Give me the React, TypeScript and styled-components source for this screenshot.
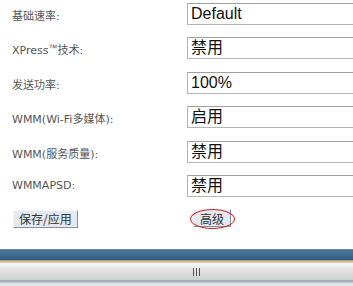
import React from 'react';
import styled, { createGlobalStyle } from 'styled-components';

function App(){
    const rows = [
        { label: <>基础速率:</>, value: 'Default' },
        { label: <>XPress<TmMark>™</TmMark>技术:</>, value: '禁用' },
        { label: <>发送功率:</>, value: '100%' },
        { label: <>WMM(Wi-Fi多媒体):</>, value: '启用' },
        { label: <>WMM(服务质量):</>, value: '禁用' },
        { label: <>WMMAPSD:</>, value: '禁用' },
    ];

    return(
        <Page>
            <GlobalStyle />
            <Form>
                {rows.map((row, i) => (
                    <Row key={i}>
                        <Label>{row.label}</Label>
                        <ValueBox>{row.value}</ValueBox>
                    </Row>
                ))}
                <ButtonRow>
                    <Button>保存/应用</Button>
                    <Marked>
                        <Button>高级</Button>
                    </Marked>
                </ButtonRow>
            </Form>
            <BottomBar>
                <BlueBand />
                <TanLine />
                <GripBar>
                    <Grip>
                        <span />
                        <span />
                        <span />
                    </Grip>
                </GripBar>
                <BaseLine />
            </BottomBar>
        </Page>
    );
}

const GlobalStyle = createGlobalStyle`
    html, body {
        margin: 0;
        padding: 0;
        background: #fff;
        overflow: hidden;
    }
`;

const Page = styled.div`
    width: 353px;
    height: 286px;
    display: flex;
    flex-direction: column;
    overflow: hidden;
`;

const Form = styled.div`
    display: flex;
    flex-direction: column;
    padding-top: 3px;
    height: 246px;
`;

const Row = styled.div`
    display: grid;
    grid-template-columns: 187px 200px;
    align-items: center;
    height: 34.4px;
`;

const Label = styled.span`
    padding-left: 12px;
    font-family: "DejaVu Sans", "Noto Sans CJK SC", sans-serif;
    font-size: 11px;
    color: #555;
    align-self: start;
    padding-top: 4px;
`;

const TmMark = styled.span`
    font-family: "Liberation Sans", sans-serif;
    font-size: 9px;
    vertical-align: 3px;
`;

const ValueBox = styled.div`
    box-sizing: border-box;
    height: 22px;
    align-self: start;
    border: 1px solid #b4b4b4;
    border-top-color: #a0a0a0;
    padding: 0 3px;
    font-family: "Liberation Sans", "Noto Sans CJK SC", sans-serif;
    font-size: 16px;
    line-height: 20px;
    color: #111;
    white-space: nowrap;
`;

const ButtonRow = styled.div`
    display: grid;
    grid-template-columns: 180px auto;
    align-items: center;
    padding-left: 13px;
`;

const Button = styled.div`
    box-sizing: border-box;
    display: inline-flex;
    align-items: center;
    justify-content: center;
    height: 18px;
    padding: 0 5px;
    background: #e4e8f0;
    border: 1px solid;
    border-color: #f4f6fa #8890a0 #8890a0 #f4f6fa;
    font-family: "Noto Sans CJK SC", sans-serif;
    font-size: 12px;
    color: #333;
    width: fit-content;
    min-width: 38px;
`;

const Marked = styled.div`
    position: relative;
    width: fit-content;
    &::after {
        content: '';
        position: absolute;
        left: -3px;
        top: 0px;
        width: 45px;
        height: 20px;
        border: 1.5px solid #d42020;
        border-radius: 50%;
        box-sizing: border-box;
    }
`;

const BottomBar = styled.div`
    display: flex;
    flex-direction: column;
    margin-top: auto;
`;

const BlueBand = styled.div`
    height: 11px;
    background: linear-gradient(#7d9ab5 0px, #4c7599 1px, #3f6b92 6px, #365f85 10px, #2f5578 11px);
`;

const TanLine = styled.div`
    height: 3px;
    background: linear-gradient(#8a7b60 0px, #cbbb9d 1px, #ddd2bd 3px);
`;

const GripBar = styled.div`
    height: 17px;
    display: flex;
    justify-content: center;
    align-items: center;
    background: linear-gradient(#f8f8f8, #e2e2e2 40%, #cfcfcf);
    padding-left: 40px;
`;

const Grip = styled.div`
    display: flex;
    gap: 2px;
    span {
        display: block;
        width: 1px;
        height: 8px;
        background: #555;
    }
`;

const BaseLine = styled.div`
    height: 6px;
    background: linear-gradient(#b0b8c0 0px, #8ea0b0 1px, #d8dde2 3px, #e6e8ea 6px);
`;

export default App;
